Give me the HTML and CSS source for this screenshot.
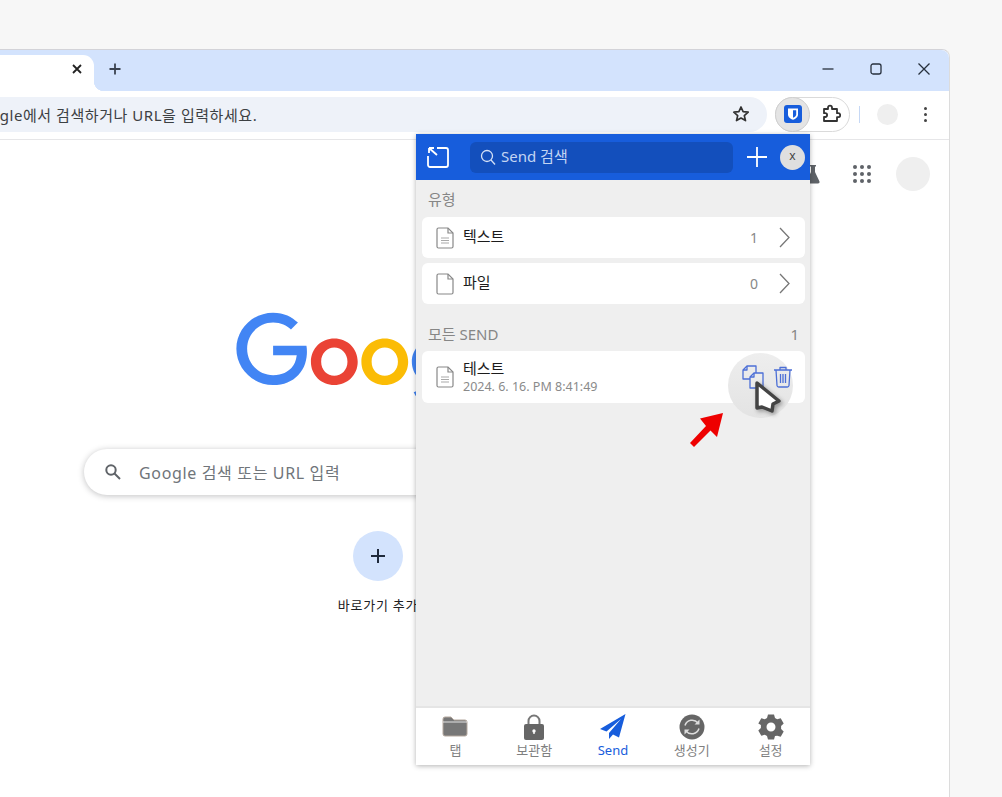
FILE: index.html
```html
<!DOCTYPE html>
<html lang="ko">
<head>
  <meta charset="UTF-8" />
  <meta name="viewport" content="width=device-width, initial-scale=1.0" />
  <title>새 탭</title>
  <link rel="stylesheet" href="styles.css">
</head>
<body>
  <div class="window">
    <div class="tabstrip">
      <div class="tab">
        <svg class="tab-close" width="10" height="10" viewBox="0 0 10 10"><path d="M1 1l8 8M9 1l-8 8" /></svg>
      </div>
      <svg class="new-tab" width="12" height="12" viewBox="0 0 12 12"><path d="M6 .5v11M.5 6h11" /></svg>
      <div class="controls">
        <svg width="12" height="12" viewBox="0 0 12 12"><path d="M.5 6h11" /></svg>
        <svg width="12" height="12" viewBox="0 0 12 12"><rect x="1" y="1" width="10" height="10" rx="2" /></svg>
        <svg width="12" height="12" viewBox="0 0 12 12"><path d="M.5.5l11 11M11.5.5l-11 11" /></svg>
      </div>
    </div>

    <div class="toolbar">
      <div class="omnibox">
        <span class="omnibox-text">Google에서 검색하거나 URL을 입력하세요.</span>
        <svg class="star" width="18" height="18" viewBox="0 0 18 18"><path d="M9 2l2.1 4.7 5.1.5-3.9 3.4 1.2 5L9 13l-4.5 2.6 1.2-5-3.9-3.4 5.1-.5z" /></svg>
      </div>
      <div class="ext-pill">
        <div class="ext-active">
          <svg width="18" height="18" viewBox="0 0 18 18"><rect width="18" height="18" rx="3" fill="#175ddc" /><path d="M4 3.5h10v6c0 2.8-2.6 4.3-5 5.3-2.4-1-5-2.5-5-5.3z" fill="#fff" /><path d="M9 5.2h3.2v4.2c0 1.6-1.7 2.6-3.2 3.3z" fill="#175ddc" /></svg>
        </div>
        <svg class="puzzle" width="20" height="20" viewBox="0 0 20 20"><path d="M3 5h4V3.6a2 2 0 0 1 4 0V5h5v4.200h1.200a2 2 0 0 1 0 4H16V17H3v-4h1.200a1.900 1.900 0 0 0 0-3.800H3z" /></svg>
      </div>
      <div class="toolbar-sep"></div>
      <div class="profile-dot"></div>
      <div class="kebab"><i></i><i></i><i></i></div>
    </div>

    <div class="ntp">
      <div class="ntp-top">
        <svg class="flask" width="14" height="20" viewBox="0 0 14 20"><path d="M4 1h6v1.500H9V8l4.500 9.500q.5 2-1.500 2H2q-2 0-1.500-2L5 8V2.500H4z" /></svg>
        <div class="apps">
          <i></i><i></i><i></i><i></i><i></i><i></i><i></i><i></i><i></i>
        </div>
        <div class="account"></div>
      </div>

      <svg class="logo" width="286" height="97" viewBox="0 0 272 92" role="img" aria-label="Google">
        <path fill="#4285f4" d="M35.290 41.410V32H67c.31 1.640.47 3.580.47 5.680 0 7.060-1.930 15.790-8.150 22.010-6.050 6.300-13.780 9.660-24.020 9.660C16.320 69.350.36 53.890.36 34.910.36 15.930 16.320.47 35.300.47c10.500 0 17.980 4.120 23.600 9.490l-6.640 6.640c-4.030-3.780-9.490-6.720-16.970-6.720-13.860 0-24.700 11.170-24.700 25.030 0 13.860 10.840 25.030 24.700 25.030 8.990 0 14.110-3.610 17.390-6.890 2.660-2.660 4.410-6.460 5.100-12.050l-22.490.01z" />
        <path fill="#ea4335" d="M115.750 47.180c0 12.770-9.990 22.180-22.250 22.180s-22.250-9.410-22.250-22.180C71.250 34.320 81.240 25 93.500 25s22.250 9.320 22.250 22.180zm-9.740 0c0-7.980-5.790-13.440-12.510-13.440S80.990 39.200 80.990 47.180c0 7.900 5.790 13.440 12.510 13.440s12.510-5.550 12.510-13.440z" />
        <path fill="#fbbc05" d="M163.750 47.180c0 12.770-9.990 22.180-22.250 22.180s-22.250-9.410-22.250-22.180c0-12.850 9.990-22.180 22.250-22.180s22.250 9.320 22.250 22.180zm-9.740 0c0-7.980-5.790-13.440-12.510-13.440s-12.510 5.460-12.510 13.440c0 7.900 5.790 13.440 12.510 13.440s12.510-5.550 12.510-13.440z" />
        <path fill="#4285f4" d="M209.750 26.340v39.820c0 16.380-9.660 23.070-21.080 23.070-10.750 0-17.220-7.190-19.660-13.070l8.480-3.530c1.510 3.610 5.210 7.870 11.170 7.870 7.310 0 11.840-4.510 11.840-13v-3.190h-.34c-2.180 2.690-6.380 5.040-11.680 5.040-11.090 0-21.250-9.660-21.250-22.090 0-12.520 10.160-22.260 21.250-22.260 5.290 0 9.490 2.350 11.680 4.960h.34v-3.610h9.250zm-8.560 20.920c0-7.810-5.210-13.520-11.840-13.520-6.720 0-12.350 5.710-12.350 13.520 0 7.730 5.630 13.360 12.350 13.360 6.630 0 11.840-5.630 11.840-13.360z" />
      </svg>

      <div class="realbox">
        <svg width="18" height="18" viewBox="0 0 18 18"><circle cx="7" cy="7" r="4.700" /><path d="M10.500 10.500l5.500 5.500" /></svg>
        <span>Google 검색 또는 URL 입력</span>
      </div>

      <div class="add-shortcut">
        <svg width="14" height="14" viewBox="0 0 14 14"><path d="M7 0v14M0 7h14" /></svg>
      </div>
      <div class="add-label">바로가기 추가</div>
    </div>

    <!-- vault popup, sits over the new tab page -->
    <div class="popup">
      <header class="popup-head">
        <svg class="pop-out" width="22" height="22" viewBox="0 0 22 22"><path d="M10 2h9a2 2 0 0 1 2 2v15a2 2 0 0 1-2 2H3a2 2 0 0 1-2-2v-9" /><path d="M2 2l8 7M2 2h5M2 2v5" /></svg>
        <div class="search">
          <svg width="16" height="17" viewBox="0 0 16 17"><circle cx="7" cy="7" r="5.500" /><path d="M11 11l4 4.500" /></svg>
          <span>Send 검색</span>
        </div>
        <svg class="add" width="20" height="20" viewBox="0 0 20 20"><path d="M10 0v20M0 10h20" /></svg>
        <div class="popup-x">x</div>
      </header>

      <main class="popup-body">
        <div class="section-label">유형</div>
        <div class="rows">
          <div class="row">
            <svg class="doc" width="18" height="22" viewBox="0 0 18 22"><path d="M2.500 1H12l5 5v13.500a1.500 1.500 0 0 1-1.500 1.500h-13A1.500 1.500 0 0 1 1 19.500v-17A1.500 1.500 0 0 1 2.500 1z" /><path d="M12 1v5h5" /><path class="doc-lines" d="M5 11h8M5 13.500h8M5 16h8" /></svg>
            <span class="row-title">텍스트</span>
            <span class="row-count">1</span>
            <svg class="chevron" width="11" height="21" viewBox="0 0 11 21"><path d="M1 1l9 9.500L1 20" /></svg>
          </div>
          <div class="row">
            <svg class="doc" width="18" height="22" viewBox="0 0 18 22"><path d="M2.500 1H12l5 5v13.500a1.500 1.500 0 0 1-1.500 1.500h-13A1.500 1.500 0 0 1 1 19.500v-17A1.500 1.500 0 0 1 2.500 1z" /><path d="M12 1v5h5" /></svg>
            <span class="row-title">파일</span>
            <span class="row-count">0</span>
            <svg class="chevron" width="11" height="21" viewBox="0 0 11 21"><path d="M1 1l9 9.500L1 20" /></svg>
          </div>
        </div>

        <div class="section-label section-all"><span>모든 SEND</span><span>1</span></div>
        <div class="row row-send">
          <div class="hover-ring"></div>
          <svg class="doc" width="18" height="22" viewBox="0 0 18 22"><path d="M2.500 1H12l5 5v13.500a1.500 1.500 0 0 1-1.500 1.500h-13A1.500 1.500 0 0 1 1 19.500v-17A1.500 1.500 0 0 1 2.500 1z" /><path d="M12 1v5h5" /><path class="doc-lines" d="M5 11h8M5 13.500h8M5 16h8" /></svg>
          <div class="send-text">
            <div class="row-title">테스트</div>
            <div class="send-date">2024. 6. 16. PM 8:41:49</div>
          </div>
          <div class="send-actions">
            <svg width="22" height="24" viewBox="0 0 22 24"><path d="M5 1h9v13H1V5z" /><path d="M5 1v4H1" /><path class="copy-front" d="M12 8h9v15H8V12z" /><path d="M12 8v4H8" /></svg>
            <svg width="20" height="22" viewBox="0 0 20 22"><path d="M1 4h18M7 4V1.500h6V4M3 4l1 15.500q.2 1.500 1.700 1.500h8.600q1.500 0 1.700-1.500L17 4M7.500 8v9M10 8v9M12.500 8v9" /></svg>
          </div>
        </div>
      </main>

      <nav class="popup-nav">
        <div class="nav-item">
          <svg width="26" height="26" viewBox="0 0 26 26"><path d="M1 5q0-2 2-2h6l3 3h11q2 0 2 2v12q0 2-2 2H3q-2 0-2-2z" fill="#777" stroke="#b5a99f" stroke-width="1" /><path d="M1 8h24" stroke="#fff" stroke-width=".8" /></svg>
          <span>탭</span>
        </div>
        <div class="nav-item">
          <svg width="22" height="26" viewBox="0 0 22 26"><path d="M5.500 11V7a5.500 5.500 0 0 1 11 0v4" fill="none" stroke="#777" stroke-width="2" /><rect x="1" y="10" width="20" height="16" rx="2" fill="#666" /><circle cx="11" cy="17" r="1.700" fill="#fff" /><path d="M10.300 17h1.400v3h-1.400z" fill="#fff" /></svg>
          <span>보관함</span>
        </div>
        <div class="nav-item nav-active">
          <svg width="26" height="26" viewBox="0 0 26 26"><path d="M25.500 0L0 15l6.500 2.500L21 5 9 19v6l4-4.500 6 3z" fill="#175ddc" /></svg>
          <span>Send</span>
        </div>
        <div class="nav-item">
          <svg width="26" height="26" viewBox="0 0 26 26"><circle cx="13" cy="13" r="12.500" fill="#666" /><path d="M6 11.500a7.500 7.500 0 0 1 13-2.500M20 14.500a7.500 7.500 0 0 1-13 2.500" fill="none" stroke="#ddd" stroke-width="1.500" /><path d="M20.500 5.500v5h-5zM5.500 20.500v-5h5z" fill="#ddd" /></svg>
          <span>생성기</span>
        </div>
        <div class="nav-item">
          <svg width="26" height="26" viewBox="0 0 26 26"><path fill-rule="evenodd" fill="#666" d="M10 .5h6l1 3.500 2.200 1.300 3.500-1 3 5.200-2.600 2.500v3l2.600 2.500-3 5.200-3.500-1L17 22l-1 3.500h-6L9 22l-2.200-1.300-3.500 1-3-5.200 2.600-2.500v-3L.3 9.500l3-5.200 3.500 1L9 4zM13 8.500a4.500 4.500 0 1 0 0 9 4.500 4.500 0 0 0 0-9z" /></svg>
          <span>설정</span>
        </div>
      </nav>

      <svg class="pointer" width="30" height="36" viewBox="0 0 30 36"><path d="M3 3l22 18-6 3-1 7-10-4-5 1z" /></svg>
      <svg class="red-arrow" width="34" height="36" viewBox="0 0 34 36"><path d="M33 1L27 25l-6.500-6.500L4 35l-4-4 16-17-6-7.500z" /></svg>
    </div>
  </div>
</body>
</html>
```

FILE: styles.css
```css
* {
  box-sizing: border-box;
}
html, body {
  height: 797px;
}
body {
  margin: 0;
  overflow: hidden;
  background-color: #f7f7f7;
  font-family: "Noto Sans", "Noto Sans CJK KR", sans-serif;
  color: #212529;
}

/* browser frame runs off the left edge */
.window {
  position: relative;
  width: 1143px;
  height: 748px;
  margin: 49px 0 0 -193px;
  background: #fff;
  border-top: 1px solid #d3d3d8;
  border-right: 1px solid #dcdcdc;
  border-radius: 0 8px 0 0;
}

.tabstrip {
  display: flex;
  align-items: flex-end;
  height: 41px;
  background: #d3e3fd;
  border-radius: 0 8px 0 0;
}
.tab {
  position: relative;
  display: flex;
  align-items: center;
  justify-content: flex-end;
  width: 287px;
  height: 36px;
  padding: 0 12px 8px 0;
  background: #fff;
  border-radius: 0 11px 0 0;
}
.tab::after {
  content: "";
  position: absolute;
  left: 100%;
  bottom: 0;
  width: 10px;
  height: 10px;
  background: radial-gradient(circle at 100% 0, transparent 10px, #fff 10.5px);
}
.tab-close {
  fill: none;
  stroke: #222;
  stroke-width: 1.800;
}
.new-tab {
  align-self: center;
  margin: 0 0 3px 15px;
  fill: none;
  stroke: #3b4350;
  stroke-width: 1.800;
}
.controls {
  display: flex;
  align-self: center;
  gap: 36px;
  margin-left: auto;
  padding: 0 19px 3px 0;
}
.controls svg {
  fill: none;
  stroke: #27303d;
  stroke-width: 1.300;
}

.toolbar {
  display: flex;
  align-items: center;
  height: 49px;
  padding-bottom: 2px;
  background: #fff;
  border-bottom: 1px solid #e6e6e8;
  border-radius: 0 6px 0 0;
}
.omnibox {
  display: flex;
  align-items: center;
  justify-content: space-between;
  width: 950px;
  height: 35px;
  margin-left: 10px;
  padding: 0 17px 0 152px;
  background: #eef2f9;
  border-radius: 18px;
}
.omnibox-text {
  font-size: 15px;
  letter-spacing: .55px;
  color: #3c4043;
}
.star {
  fill: none;
  stroke: #333;
  stroke-width: 1.700;
  stroke-linejoin: round;
}
.ext-pill {
  display: flex;
  align-items: center;
  width: 75px;
  height: 35px;
  margin-left: 8px;
  border: 1px solid #dadada;
  border-radius: 18px;
}
.ext-active {
  display: flex;
  align-items: center;
  justify-content: center;
  width: 35px;
  height: 35px;
  margin-left: -1px;
  background: #e4e4e4;
  border: 1px solid #cfcfcf;
  border-radius: 50%;
}
.puzzle {
  margin-left: 11px;
  fill: none;
  stroke: #333;
  stroke-width: 1.800;
  stroke-linejoin: round;
}
.toolbar-sep {
  width: 1px;
  height: 17px;
  margin-left: 9px;
  background: #c6d8f5;
}
.profile-dot {
  width: 21px;
  height: 21px;
  margin-left: 17px;
  background: #efefef;
  border-radius: 50%;
}
.kebab {
  display: flex;
  flex-direction: column;
  gap: 3px;
  margin-left: 26px;
}
.kebab i {
  width: 3px;
  height: 3px;
  background: #444;
  border-radius: 50%;
}

.ntp {
  display: flex;
  flex-direction: column;
  align-items: center;
}
.ntp-top {
  display: flex;
  align-self: stretch;
  align-items: center;
  justify-content: flex-end;
  height: 67px;
  padding: 0 19px 0 0;
}
.flask {
  margin-right: 33px;
  fill: #5f6368;
}
.apps {
  display: grid;
  grid-template-columns: repeat(3, 4px);
  gap: 3px;
  margin-right: 25px;
}
.apps i {
  width: 4px;
  height: 4px;
  background: #5f6368;
  border-radius: 50%;
}
.account {
  width: 34px;
  height: 34px;
  background: #efefef;
  border-radius: 50%;
}
.logo {
  margin: 105px 0 0 1px;
}
.realbox {
  display: flex;
  align-items: center;
  gap: 17px;
  width: 588px;
  height: 46px;
  margin-top: 40px;
  padding-left: 20px;
  background: #fff;
  border-radius: 23px;
  box-shadow: 0 1px 6px rgba(32, 33, 36, .28);
  font-size: 16px;
  letter-spacing: .65px;
  color: #70757a;
}
.realbox svg {
  fill: none;
  stroke: #5f6368;
  stroke-width: 2;
}
.add-shortcut {
  display: flex;
  align-items: center;
  justify-content: center;
  width: 50px;
  height: 50px;
  margin-top: 36px;
  background: #d3e3fd;
  border-radius: 50%;
}
.add-shortcut svg {
  fill: none;
  stroke: #1f2a3c;
  stroke-width: 2;
}
.add-label {
  margin-top: 14px;
  font-size: 13px;
  letter-spacing: .8px;
  color: #202124;
}

/* popup */
.popup {
  position: absolute;
  top: 84px;
  right: 139px;
  display: flex;
  flex-direction: column;
  width: 394px;
  height: 631px;
  background: #efefef;
  box-shadow: 0 1px 5px rgba(0, 0, 0, .3);
}
.popup-head {
  position: relative;
  display: flex;
  align-items: center;
  height: 46px;
  padding-left: 11px;
  background: #175ddc;
}
.pop-out {
  fill: none;
  stroke: #fff;
  stroke-width: 1.800;
}
.search {
  display: flex;
  align-items: center;
  gap: 5px;
  width: 263px;
  height: 31px;
  margin-left: 21px;
  padding-left: 10px;
  background: #134fbc;
  border-radius: 6px;
  font-size: 15px;
  color: #c3d5f3;
}
.search span {
  margin-top: -3px;
}
.search svg {
  fill: none;
  stroke: #d4e0f6;
  stroke-width: 1.300;
}
.add {
  margin-left: 14px;
  fill: none;
  stroke: #fff;
  stroke-width: 1.800;
}
.popup-x {
  display: flex;
  align-items: center;
  justify-content: center;
  width: 25px;
  height: 25px;
  margin-left: 13px;
  padding-bottom: 3px;
  background: #dfdfdf;
  border-radius: 50%;
  font-size: 12px;
  color: #444;
}

.popup-body {
  flex: 1;
  padding: 9px 5px 0 6px;
}
.section-label {
  height: 20px;
  padding: 0 6px;
  margin-bottom: 8px;
  font-size: 15px;
  line-height: 20px;
  color: #868686;
}
.section-all {
  display: flex;
  justify-content: space-between;
  margin: 20px 0 7px;
}
.rows {
  display: flex;
  flex-direction: column;
  gap: 5px;
}
.row {
  position: relative;
  display: flex;
  align-items: center;
  height: 41px;
  padding: 0 15px 0 14px;
  background: #fff;
  border-radius: 6px;
}
.row-send {
  height: 52px;
  padding-right: 12px;
}
.doc {
  flex: none;
  fill: none;
  stroke: #888;
  stroke-width: 1.200;
}
.doc-lines {
  stroke: #aaa;
}
.row-title {
  margin-left: 9px;
  font-size: 15px;
  line-height: 20px;
  color: #1c1c1c;
}
.rows .row-title {
  margin-top: -3px;
}
.row-count {
  margin-left: auto;
  font-size: 14px;
  color: #888;
}
.chevron {
  margin-left: 21px;
  fill: none;
  stroke: #777;
  stroke-width: 1.300;
}
.send-text .row-title {
  line-height: 18px;
}
.send-date {
  margin-left: 9px;
  font-size: 12.500px;
  line-height: 19px;
  color: #8a8a8a;
}
.send-actions {
  position: relative;
  display: flex;
  align-items: center;
  gap: 9px;
  margin-left: auto;
}
.send-actions svg {
  fill: none;
  stroke: #4c6fd6;
  stroke-width: 1.300;
  stroke-linejoin: round;
}
.copy-front {
  fill: #ececec;
}
.hover-ring {
  position: absolute;
  left: 306px;
  top: 2px;
  width: 65px;
  height: 65px;
  background: linear-gradient(#eee, #e3e3e3);
  border-radius: 50%;
}

.popup-nav {
  display: grid;
  grid-template-columns: repeat(5, 1fr);
  height: 59px;
  background: #fff;
  border-top: 2px solid #e5e5e5;
}
.nav-item {
  display: flex;
  flex-direction: column;
  align-items: center;
  justify-content: flex-end;
  height: 50px;
  font-size: 13px;
  line-height: 16px;
  color: #808080;
}
.nav-item svg {
  flex: none;
  margin-bottom: 2px;
}
.nav-active {
  color: #175ddc;
}

/* mouse pointer and callout arrow over the send row */
.pointer {
  position: absolute;
  left: 338px;
  top: 246px;
  fill: #fff;
  stroke: #444;
  stroke-width: 3.500;
  stroke-linejoin: round;
  filter: drop-shadow(2px 2px 2px rgba(0, 0, 0, .35));
}
.red-arrow {
  position: absolute;
  left: 274px;
  top: 278px;
  fill: #ee0000;
}
```
